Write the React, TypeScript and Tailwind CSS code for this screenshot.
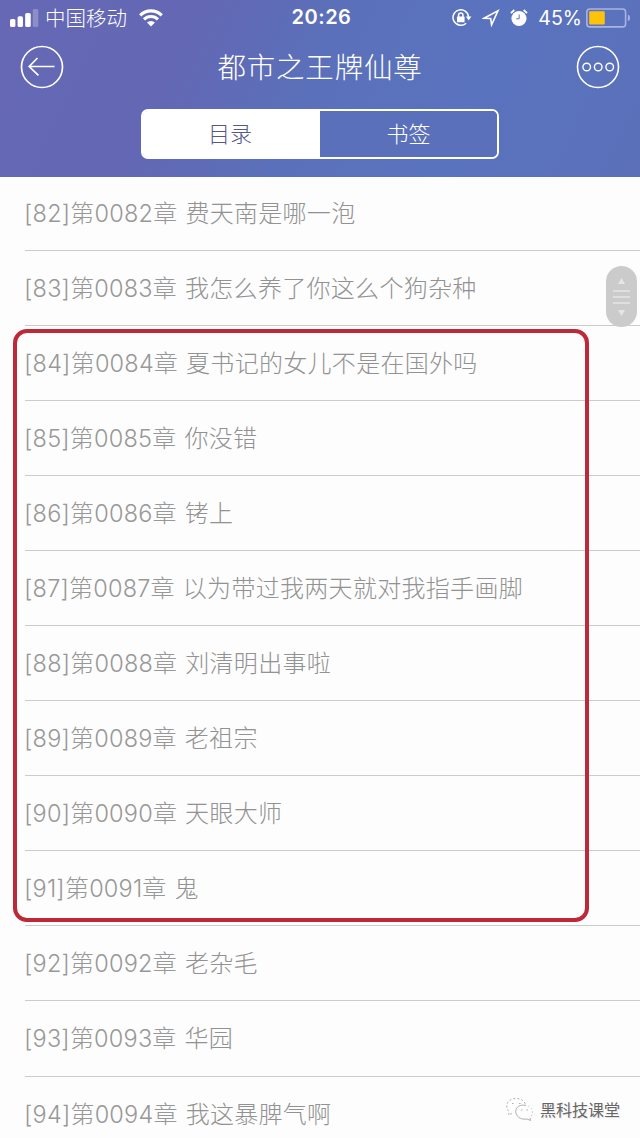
import React from "react";

const chapters: [string, string][] = [
  ["82", "费天南是哪一泡"],
  ["83", "我怎么养了你这么个狗杂种"],
  ["84", "夏书记的女儿不是在国外吗"],
  ["85", "你没错"],
  ["86", "铐上"],
  ["87", "以为带过我两天就对我指手画脚"],
  ["88", "刘清明出事啦"],
  ["89", "老祖宗"],
  ["90", "天眼大师"],
  ["91", "鬼"],
  ["92", "老杂毛"],
  ["93", "华园"],
  ["94", "我这暴脾气啊"],
];

function StatusBar() {
  return (
    <div className="flex h-[35px] items-center pl-[10px] pr-[9px] text-white">
      <svg width="29" height="18" viewBox="0 0 29 18" fill="white">
        <rect x="0" y="10" width="5.4" height="8" rx="1.6" />
        <rect x="7.6" y="7.3" width="5.4" height="10.7" rx="1.6" />
        <rect x="15.2" y="4" width="5.6" height="14" rx="1.6" />
        <rect x="22.8" y="0" width="5.6" height="18" rx="1.6" opacity=".25" />
      </svg>
      <span className="ml-[6px] w-[86px] whitespace-nowrap text-[20.5px] font-light leading-[35px]">中国移动</span>
      <svg className="ml-[8px]" width="24" height="18" viewBox="0 0 24 18" fill="none" stroke="white" strokeWidth="3.2">
        <path d="M1.2 6.3a15.3 15.3 0 0 1 21.6 0" />
        <path d="M5 10.4a9.9 9.9 0 0 1 14 0" />
        <path d="M12 17.6 8 13.6a5.7 5.7 0 0 1 8 0Z" fill="white" stroke="none" />
      </svg>
      <span className="ml-[129px] w-[60px] whitespace-nowrap font-['Inter',sans-serif] text-[20px] font-semibold leading-[37px] tracking-[0.5px]">20:26</span>
      <svg className="ml-[101px]" width="20" height="18" viewBox="0 0 20 18" fill="none" stroke="white" strokeWidth="1.5">
        <path d="M14.2 14.2A7.8 7.8 0 1 1 16.6 8" />
        <path d="M13.9 7.6h5.6l-2.8 3.8Z" fill="white" stroke="none" />
        <rect x="5" y="7.6" width="7.6" height="5.7" rx=".6" fill="white" stroke="none" />
        <path d="M6.6 8V6.2a2.2 2.2 0 0 1 4.4 0V8" />
      </svg>
      <svg className="ml-[10px]" width="18" height="18" viewBox="0 0 18 18" fill="none" stroke="white" strokeWidth="1.6">
        <path d="M2 9.3 16 1.8 9.6 15.8 8.7 9.5Z" />
      </svg>
      <svg className="ml-[10px]" width="18" height="18" viewBox="0 0 18 18" fill="none" stroke="white" strokeWidth="2">
        <circle cx="9" cy="9.5" r="7.6" fill="white" stroke="none" />
        <path d="M.9 4.2 4.3 1M13.7 1l3.4 3.2" strokeWidth="1.8" />
        <path d="M9.2 5.5v4.3H6.2" stroke="#5d70b8" strokeWidth="1" />
      </svg>
      <span className="ml-[10px] w-[44px] whitespace-nowrap font-['Inter',sans-serif] text-[19.5px] leading-[36px]">45%</span>
      <svg className="ml-[4px]" width="45" height="20" viewBox="0 0 45 20">
        <rect x=".9" y=".9" width="38.8" height="18" rx="3" fill="none" stroke="#a9b3e5" strokeWidth="1.6" />
        <rect x="3.2" y="3.2" width="15.6" height="13.4" rx="1" fill="#ffc20a" />
        <path d="M42 6.5q2.2 1 2.2 3.4T42 13.3Z" fill="#a9b3e5" />
      </svg>
    </div>
  );
}

function Header() {
  return (
    <header className="h-[177px] shrink-0 bg-[linear-gradient(115deg,#6668b5_0%,#6367b4_28%,#5b70ba_48%,#5a73be_72%,#5b70b9_100%)] text-white">
      <StatusBar />
      <div className="flex h-[64px] items-center justify-between px-5">
        <svg className="mb-px" width="44" height="44" viewBox="0 0 44 44" fill="none" stroke="white" strokeWidth="1.7">
          <circle cx="22" cy="22" r="20.5" />
          <path d="M34.5 21.5h-25M17.5 13l-8.3 8.5 9.2 8.9" />
        </svg>
        <h1 className="mb-px whitespace-nowrap text-[28.5px] font-light leading-none tracking-[0.8px]">都市之王牌仙尊</h1>
        <svg className="mb-px" width="44" height="44" viewBox="0 0 44 44" fill="none" stroke="white" strokeWidth="1.6">
          <circle cx="22" cy="22" r="20.5" />
          <circle cx="10.7" cy="22" r="3.8" strokeWidth="1.4" />
          <circle cx="22.2" cy="22" r="3.8" strokeWidth="1.4" />
          <circle cx="33.7" cy="22" r="3.8" strokeWidth="1.4" />
        </svg>
      </div>
      <div className="mx-auto mt-[10px] flex h-[50px] w-[358px] rounded-[7px] border-2 border-white text-[22px] font-light leading-[43px]">
        <div className="w-[177px] rounded-l-[4px] bg-white pr-[3px] text-center text-[#54578c]">目录</div>
        <div className="flex-1 rounded-r-[5px] bg-[#5a70bb] text-center">书签</div>
      </div>
    </header>
  );
}

export default function App() {
  return (
    <div className="relative flex h-[1138px] w-[640px] flex-col overflow-hidden bg-[#fdfdfd] font-['Noto_Sans_CJK_SC',sans-serif]">
      <Header />
      <main className="pl-[25px]">
        {chapters.map(([number, title]) => (
          <div key={number} className="flex h-[75.06px] items-baseline whitespace-pre border-b border-[#cbcbcb] pt-[18px] text-[24px] font-light leading-[36px] text-[#929292] first:h-[74px] first:pt-[17px]">
            <span className="-ml-px font-['Inter','Noto_Sans_CJK_SC',sans-serif] text-[23.5px] tracking-[0.2px] text-[#989898]">
              <span className="text-[24px]">[</span>{number}<span className="text-[24px]">]第</span>00{number}<span className="text-[24px]">章</span>
            </span>
            <span className="ml-[8px] tracking-[0.3px]">{title}</span>
          </div>
        ))}
      </main>

      <div className="absolute left-[13px] top-[329px] h-[593px] w-[576px] rounded-[14px] border-4 border-[#bd2938]" />

      <div className="absolute left-[606px] top-[266px] flex h-[61px] w-[31px] items-center justify-center rounded-full bg-[#cbcbcb]">
        <svg width="17" height="38" viewBox="0 0 17 38" fill="#e6e6e6" stroke="#e6e6e6" strokeWidth="1.4">
          <path d="m8.5 0 3.5 6H5Z" stroke="none" />
          <path d="M0 13h17M0 19h17M0 25h17" />
          <path d="m8.5 38 3.5-6H5Z" stroke="none" />
        </svg>
      </div>

      <div className="absolute left-[505px] top-[1095px] flex items-center">
        <svg width="29" height="26" viewBox="0 0 29 26" fill="#fefefe" stroke="#9a9a9a" strokeWidth=".8">
          <path strokeDasharray="2 2" d="M7 17.5 3.5 19l.8-3.2C-1.2 10.5 2.5 2.5 11 2.5c6 0 9.5 3.5 9.8 7.5" />
          <path stroke="none" d="M25 21.8c7-6 .7-13.6-6.5-12.6-9.5 1.3-10 13.2.5 14.2 1.5.1 3 0 4-.5l3.5 1.6Z" />
          <path d="M20 9.2C13 8.5 9.8 12.5 11 17.2c1.3 4.6 6 6.7 11 5.8l3.5 1.5-.5-2.7" />
          <path strokeDasharray="1 2.5" d="M20 9.2c7 .7 10 7.3 5 12.6" />
          <path d="M7 7.5h1.5M14 7.5h1.5M16 14h1.5M21.5 14H23" />
        </svg>
        <span className="ml-[6px] whitespace-nowrap text-[16px] leading-[28px] text-[#666666] [text-shadow:-1px_-1px_0_#fff,1px_1px_1px_#ddd]">黑科技课堂</span>
      </div>
    </div>
  );
}
